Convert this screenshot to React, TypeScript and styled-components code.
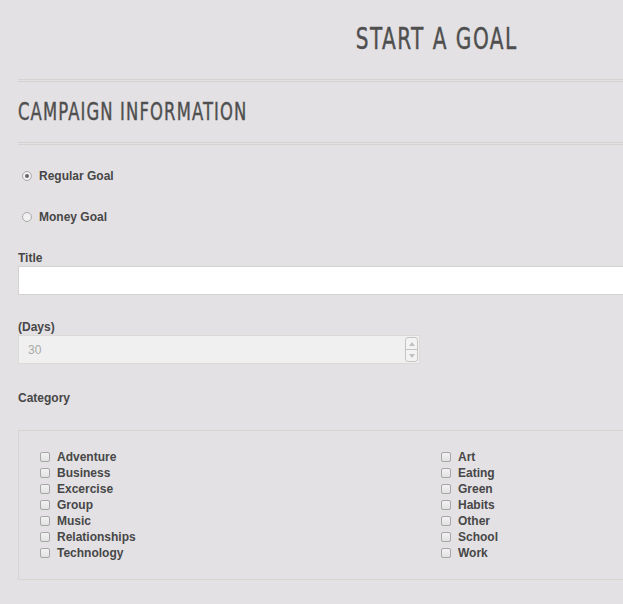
import React from "react";
import styled, { createGlobalStyle } from "styled-components";

const GlobalStyle = createGlobalStyle`
  html, body {
    margin: 0;
    padding: 0;
    background: #e3e1e4;
    overflow: hidden;
  }
  body {
    font-family: "Liberation Sans", Arial, sans-serif;
    color: #4a4a4a;
  }
`;

const Page = styled.div`
  width: 838px;
  padding: 19px 18px 40px;
`;

const PageTitle = styled.h1`
  margin: 0;
  font-family: "DejaVu Sans Condensed", "DejaVu Sans", sans-serif;
  font-weight: 400;
  font-size: 30px;
  line-height: 40px;
  text-align: center;
  color: #4f4f4f;
`;

const Condensed = styled.span<{ $origin: string; $scale: number; $spacing: number }>`
  display: inline-block;
  letter-spacing: ${(p) => p.$spacing}px;
  transform: scaleX(${(p) => p.$scale});
  transform-origin: ${(p) => p.$origin};
  -webkit-text-stroke: 0.4px #4f4f4f;
`;

const Rule = styled.hr<{ $top: number }>`
  margin: ${(p) => p.$top}px 0 0;
  height: 0;
  border: 0;
  border-top: 3px double #d5d3cf;
`;

const SectionTitle = styled.h2`
  margin: 15px 0 0;
  font-family: "DejaVu Sans Condensed", "DejaVu Sans", sans-serif;
  font-weight: 400;
  font-size: 24px;
  line-height: 30px;
  color: #4f4f4f;
  white-space: nowrap;
`;

const RadioGroup = styled.div`
  display: flex;
  flex-direction: column;
  gap: 25px;
  margin-top: 23px;
`;

const RadioLabel = styled.label`
  display: flex;
  align-items: center;
  gap: 7px;
  padding-left: 4px;
  height: 16px;
  font-size: 12px;
  font-weight: 700;
  color: #474747;
`;

const Radio = styled.input.attrs({ type: "radio" })`
  appearance: none;
  margin: 0;
  width: 10px;
  height: 10px;
  border-radius: 50%;
  border: 1px solid #a9a9a9;
  background: #f1f1f1;
  box-sizing: border-box;
  display: grid;
  place-items: center;
  &:checked::after {
    content: "";
    width: 4px;
    height: 4px;
    border-radius: 50%;
    background: #666;
  }
`;

const FieldLabel = styled.div<{ $top: number }>`
  margin-top: ${(p) => p.$top}px;
  font-size: 12px;
  font-weight: 700;
  line-height: 16px;
  color: #474747;
`;

const TextInput = styled.input`
  display: block;
  box-sizing: border-box;
  width: 100%;
  height: 29px;
  margin-top: 0;
  border: 1px solid #d5d3cf;
  background: #fff;
  outline: none;
`;

const NumberBox = styled.div`
  box-sizing: border-box;
  width: 402px;
  height: 29px;
  margin-top: 0;
  display: flex;
  align-items: center;
  border: 1px solid #dcdad7;
  background: #f0f0f0;
  padding: 0 0 0 9px;
`;

const NumberValue = styled.input`
  flex: 1;
  border: 0;
  background: transparent;
  font-family: "Liberation Sans", Arial, sans-serif;
  font-size: 12px;
  color: #a8a8a8;
  padding: 0;
  outline: none;
`;

const Spinner = styled.div`
  display: flex;
  flex-direction: column;
  width: 13px;
  height: 25px;
  margin-right: 1px;
  border: 1px solid #c4c4c4;
  border-radius: 3px;
  background: #f3f3f3;
  box-sizing: border-box;
`;

const SpinBtn = styled.div<{ $down?: boolean }>`
  flex: 1;
  display: grid;
  place-items: center;
  border-top: ${(p) => (p.$down ? "1px solid #c4c4c4" : "0")};
  &::after {
    content: "";
    width: 0;
    height: 0;
    border-left: 3.5px solid transparent;
    border-right: 3.5px solid transparent;
    ${(p) => (p.$down ? "border-top: 4px solid #c0c0c0;" : "border-bottom: 4px solid #c0c0c0;")}
  }
`;

const CategoryBox = styled.div`
  margin-top: 24px;
  border: 1px solid #d8d6d0;
  padding: 18px 22px 18px 21px;
  display: grid;
  grid-template-columns: 401px 1fr;
`;

const CategoryColumn = styled.div`
  display: flex;
  flex-direction: column;
`;

const CheckLabel = styled.label`
  display: flex;
  align-items: center;
  gap: 7px;
  height: 16px;
  font-size: 12px;
  font-weight: 700;
  color: #474747;
`;

const Checkbox = styled.input.attrs({ type: "checkbox" })`
  appearance: none;
  margin: 0;
  width: 10px;
  height: 10px;
  box-sizing: border-box;
  border: 1px solid #a6a6a6;
  border-radius: 2px;
  background: linear-gradient(#f2f2f2, #e2e2e2);
`;

const left = ["Adventure", "Business", "Excercise", "Group", "Music", "Relationships", "Technology"];
const right = ["Art", "Eating", "Green", "Habits", "Other", "School", "Work"];

export default function App() {
  return (
    <>
      <GlobalStyle />
      <Page>
        <PageTitle>
          <Condensed $origin="center" $scale={0.745} $spacing={2}>START A GOAL</Condensed>
        </PageTitle>
        <Rule $top={20} />
        <SectionTitle>
          <Condensed $origin="left" $scale={0.76} $spacing={1.5}>CAMPAIGN INFORMATION</Condensed>
        </SectionTitle>
        <Rule $top={15} />
        <RadioGroup>
          <RadioLabel>
            <Radio name="goal" defaultChecked />
            Regular Goal
          </RadioLabel>
          <RadioLabel>
            <Radio name="goal" />
            Money Goal
          </RadioLabel>
        </RadioGroup>
        <FieldLabel $top={25}>Title</FieldLabel>
        <TextInput type="text" />
        <FieldLabel $top={24}>(Days)</FieldLabel>
        <NumberBox>
          <NumberValue type="text" defaultValue="30" disabled />
          <Spinner>
            <SpinBtn />
            <SpinBtn $down />
          </Spinner>
        </NumberBox>
        <FieldLabel $top={26}>Category</FieldLabel>
        <CategoryBox>
          <CategoryColumn>
            {left.map((c) => (
              <CheckLabel key={c}>
                <Checkbox />
                {c}
              </CheckLabel>
            ))}
          </CategoryColumn>
          <CategoryColumn>
            {right.map((c) => (
              <CheckLabel key={c}>
                <Checkbox />
                {c}
              </CheckLabel>
            ))}
          </CategoryColumn>
        </CategoryBox>
      </Page>
    </>
  );
}
